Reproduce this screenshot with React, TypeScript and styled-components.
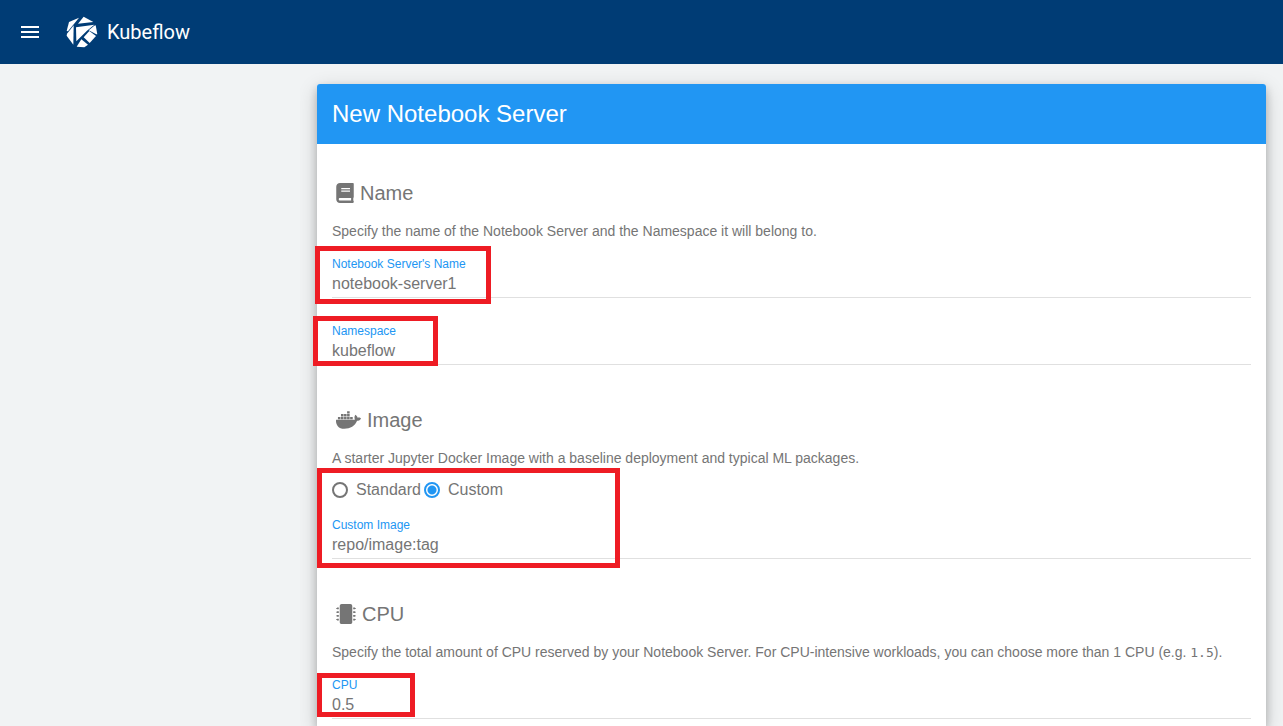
import React from "react";
import styled, { createGlobalStyle } from "styled-components";
import { FaBook, FaDocker, FaMicrochip } from "react-icons/fa";

const GlobalStyle = createGlobalStyle`
  *, *::before, *::after { box-sizing: border-box; }
  body {
    margin: 0;
    background: #f1f3f4;
    color: #757575;
    font-family: "Liberation Sans", Arial, sans-serif;
    font-size: 14px;
    line-height: 20px;
  }
`;

const Page = styled.div`
  display: flex;
  flex-direction: column;
  min-height: 100vh;
`;

const AppBar = styled.header`
  display: flex;
  align-items: center;
  height: 64px;
  padding: 0 18px;
  background: #003c75;
  color: #fff;
`;

const MenuButton = styled.button`
  display: flex;
  padding: 0;
  margin-right: 24px;
  border: 0;
  background: none;
  color: inherit;
  cursor: pointer;
`;

const Brand = styled.a`
  display: flex;
  align-items: center;
  gap: 9px;
  color: inherit;
  text-decoration: none;
  font: 400 20px/24px Roboto, sans-serif;
`;

const Main = styled.main`
  display: flex;
  flex: 1;
  margin-left: 300px;
  padding: 20px 17px 0;
  overflow: hidden;
`;

const Card = styled.form`
  flex: 1;
  min-width: 0;
  border-radius: 3px 3px 0 0;
  background: #fff;
  box-shadow: 0 4px 8px 0 rgba(0, 0, 0, 0.2), 0 6px 20px 0 rgba(0, 0, 0, 0.19);
`;

const CardTitle = styled.h1`
  margin: 0;
  padding: 14px 15px;
  border-radius: 3px 3px 0 0;
  background: #2196f3;
  color: #fff;
  font-size: 24px;
  font-weight: 400;
  line-height: 32px;
`;

const Sections = styled.div`
  display: flex;
  flex-direction: column;
  gap: 43px;
  padding: 37px 15px 7px;
`;

const Section = styled.section``;

const SectionTitle = styled.h2<{ $iconWidth: number }>`
  display: flex;
  align-items: center;
  gap: 6px;
  margin: 0 0 16px;
  padding-left: 4px;
  font-size: 20px;
  font-weight: 400;
  line-height: 24px;

  svg {
    flex: none;
    width: ${(p) => p.$iconWidth}px;
    height: 20px;
  }
`;

const Description = styled.p<{ $gap?: number }>`
  margin: 0 0 ${(p) => p.$gap ?? 14}px;
`;

const Code = styled.code`
  font: 13px/16px "DejaVu Sans Mono", monospace;
`;

const Fields = styled.div`
  display: flex;
  flex-direction: column;
  gap: 24px;
`;

const Marked = styled.div`
  position: relative;
`;

const Marker = styled.span<{ $x: number; $y: number; $w: number; $h: number }>`
  position: absolute;
  left: ${(p) => p.$x}px;
  top: ${(p) => p.$y}px;
  width: ${(p) => p.$w}px;
  height: ${(p) => p.$h}px;
  border: 5px solid #ee1c24;
  pointer-events: none;
`;

const FieldLabel = styled.label`
  display: block;
  padding-top: 2px;
  color: #2196f3;
  font-size: 12px;
  line-height: 14px;
`;

const TextInput = styled.input`
  display: block;
  width: 100%;
  height: 27px;
  padding: 0;
  border: 0;
  border-bottom: 1px solid #e0e0e0;
  outline: 0;
  background: none;
  color: inherit;
  font: 16px/20px "Liberation Sans", Arial, sans-serif;
`;

const RadioRow = styled.div`
  display: flex;
  gap: 3px;
  margin-bottom: 14px;
`;

const RadioLabel = styled.label`
  display: flex;
  align-items: center;
  gap: 8px;
  font-size: 16px;
  line-height: 24px;
`;

const Radio = styled.input`
  appearance: none;
  width: 16px;
  height: 16px;
  margin: 0;
  border: 2px solid #757575;
  border-radius: 50%;

  &:checked {
    border-color: #2196f3;
    background: radial-gradient(circle, #2196f3 4px, transparent 5px);
  }
`;

const MenuIcon = () => (
  <svg width="24" height="24" viewBox="0 0 24 24" fill="currentColor" aria-hidden="true">
    <path d="M3 18h18v-2H3v2zm0-5h18v-2H3v2zm0-7v2h18V6H3z" />
  </svg>
);

const Logo = () => (
  <svg width="32" height="32" viewBox="-3 -3 96 96" fill="currentColor" aria-hidden="true">
    <path d="M6 15 36 2 3 43 -1 42Z" />
    <path d="M50 -1 79 15 33 20Z" />
    <path d="M20 25 19 83 -1 56 0 50Z" />
    <path d="M27 31 82 23 60 41 28 73Z" />
    <path d="M86 25 91 52 88 52 65 40 82 26Z" />
    <path d="M67 42 87 57 68 78 50 61Z" />
    <path d="M43 67 63 83 52 91 29 89Z" />
  </svg>
);

type FieldProps = {
  id: string;
  label: string;
  value: string;
};

const Field = ({ id, label, value }: FieldProps) => (
  <div>
    <FieldLabel htmlFor={id}>{label}</FieldLabel>
    <TextInput id={id} type="text" defaultValue={value} />
  </div>
);

export default function App() {
  return (
    <Page>
      <GlobalStyle />
      <AppBar>
        <MenuButton type="button" aria-label="Open menu">
          <MenuIcon />
        </MenuButton>
        <Brand href="#">
          <Logo />
          Kubeflow
        </Brand>
      </AppBar>
      <Main>
        <Card>
          <CardTitle>New Notebook Server</CardTitle>
          <Sections>
            <Section>
              <SectionTitle $iconWidth={18}>
                <FaBook />
                Name
              </SectionTitle>
              <Description>
                Specify the name of the Notebook Server and the Namespace it will belong to.
              </Description>
              <Fields>
                <Marked>
                  <Field id="name" label="Notebook Server's Name" value="notebook-server1" />
                  <Marker $x={-17} $y={-9} $w={176} $h={58} />
                </Marked>
                <Marked>
                  <Field id="namespace" label="Namespace" value="kubeflow" />
                  <Marker $x={-19} $y={-6} $w={125} $h={50} />
                </Marked>
              </Fields>
            </Section>
            <Section>
              <SectionTitle $iconWidth={25}>
                <FaDocker />
                Image
              </SectionTitle>
              <Description $gap={10}>
                A starter Jupyter Docker Image with a baseline deployment and typical ML packages.
              </Description>
              <Marked>
                <RadioRow>
                  <RadioLabel>
                    <Radio type="radio" name="imageType" value="standard" />
                    Standard
                  </RadioLabel>
                  <RadioLabel>
                    <Radio type="radio" name="imageType" value="custom" defaultChecked />
                    Custom
                  </RadioLabel>
                </RadioRow>
                <Field id="custom-image" label="Custom Image" value="repo/image:tag" />
                <Marker $x={-15} $y={-10} $w={303} $h={100} />
              </Marked>
            </Section>
            <Section>
              <SectionTitle $iconWidth={20}>
                <FaMicrochip />
                CPU
              </SectionTitle>
              <Description>
                Specify the total amount of CPU reserved by your Notebook Server. For CPU-intensive
                workloads, you can choose more than 1 CPU (e.g. <Code>1.5</Code>).
              </Description>
              <Marked>
                <Field id="cpu" label="CPU" value="0.5" />
                <Marker $x={-15} $y={-3} $w={98} $h={44} />
              </Marked>
            </Section>
          </Sections>
        </Card>
      </Main>
    </Page>
  );
}
